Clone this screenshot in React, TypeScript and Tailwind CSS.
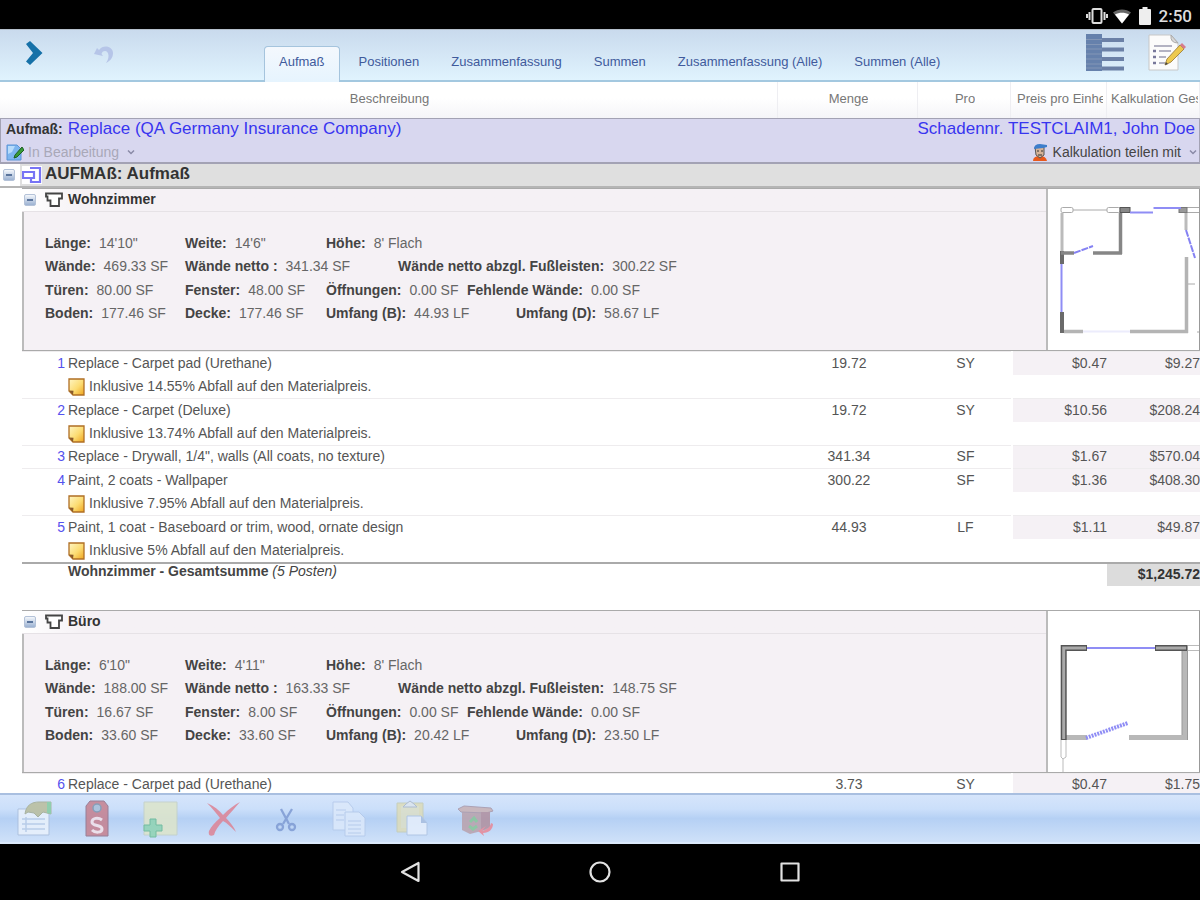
import React from "react";

const tabs = ["Aufmaß", "Positionen", "Zusammenfassung", "Summen", "Zusammenfassung (Alle)", "Summen (Alle)"];

type Stat = { label: string; value: string; at: string };
type Item = { n: number; text: string; qty: string; unit: string; price: string; total: string; note?: string };

const AT = ["col-start-1", "col-start-2", "col-start-3", "col-start-4", "col-start-5", "col-start-6"];

function stats(v: string[]): Stat[][] {
  return [
    [
      { label: "Länge:", value: v[0], at: AT[0] },
      { label: "Weite:", value: v[1], at: AT[1] },
      { label: "Höhe:", value: "8' Flach", at: AT[2] },
    ],
    [
      { label: "Wände:", value: v[2], at: AT[0] },
      { label: "Wände netto :", value: v[3], at: AT[1] },
      { label: "Wände netto abzgl. Fußleisten:", value: v[4], at: AT[3] },
    ],
    [
      { label: "Türen:", value: v[5], at: AT[0] },
      { label: "Fenster:", value: v[6], at: AT[1] },
      { label: "Öffnungen:", value: "0.00 SF", at: AT[2] },
      { label: "Fehlende Wände:", value: "0.00 SF", at: AT[4] },
    ],
    [
      { label: "Boden:", value: v[7], at: AT[0] },
      { label: "Decke:", value: v[7], at: AT[1] },
      { label: "Umfang (B):", value: v[8], at: AT[2] },
      { label: "Umfang (D):", value: v[9], at: AT[5] },
    ],
  ];
}

const living = stats(["14'10\"", "14'6\"", "469.33 SF", "341.34 SF", "300.22 SF", "80.00 SF", "48.00 SF", "177.46 SF", "44.93 LF", "58.67 LF"]);
const office = stats(["6'10\"", "4'11\"", "188.00 SF", "163.33 SF", "148.75 SF", "16.67 SF", "8.00 SF", "33.60 SF", "20.42 LF", "23.50 LF"]);

const livingItems: Item[] = [
  { n: 1, text: "Replace - Carpet pad (Urethane)", qty: "19.72", unit: "SY", price: "$0.47", total: "$9.27", note: "Inklusive 14.55% Abfall auf den Materialpreis." },
  { n: 2, text: "Replace - Carpet (Deluxe)", qty: "19.72", unit: "SY", price: "$10.56", total: "$208.24", note: "Inklusive 13.74% Abfall auf den Materialpreis." },
  { n: 3, text: "Replace - Drywall, 1/4\", walls (All coats, no texture)", qty: "341.34", unit: "SF", price: "$1.67", total: "$570.04" },
  { n: 4, text: "Paint, 2 coats - Wallpaper", qty: "300.22", unit: "SF", price: "$1.36", total: "$408.30", note: "Inklusive 7.95% Abfall auf den Materialpreis." },
  { n: 5, text: "Paint, 1 coat - Baseboard or trim, wood, ornate design", qty: "44.93", unit: "LF", price: "$1.11", total: "$49.87", note: "Inklusive 5% Abfall auf den Materialpreis." },
];

const officeItems: Item[] = [
  { n: 6, text: "Replace - Carpet pad (Urethane)", qty: "3.73", unit: "SY", price: "$0.47", total: "$1.75" },
];

function Collapse() {
  return (
    <button aria-label="Einklappen" className="flex size-3 shrink-0 items-center justify-center rounded-xs border border-[#b4c2d8] bg-linear-to-b from-[#f4f7fb] to-[#9cb2d2]">
      <span className="h-[2px] w-[6px] bg-[#5a749c]" />
    </button>
  );
}

function RoomGlyph() {
  return (
    <svg viewBox="0 0 18 16" className="h-4 w-[18px] shrink-0" fill="#fff" stroke="#444" strokeWidth="1.8">
      <path d="M1 1.5H17V6.5H14V14H5.5V8.5H2.5V4.5H1Z" />
    </svg>
  );
}

function NoteGlyph() {
  return (
    <svg viewBox="0 0 17 18" className="h-[18px] w-[17px] shrink-0">
      <defs>
        <linearGradient id="note" x1="0" y1="0" x2="1" y2="1">
          <stop offset="0" stopColor="#fff6c4" />
          <stop offset=".55" stopColor="#fcdc72" />
          <stop offset="1" stopColor="#eea41e" />
        </linearGradient>
      </defs>
      <path d="M1 1H16V17H5L1 13Z" fill="url(#note)" stroke="#b06f25" strokeWidth="1.3" />
      <path d="M1 12.5L5.5 12.8 5 17Z" fill="#8a5a2a" />
    </svg>
  );
}

function Caret() {
  return (
    <svg viewBox="0 0 8 6" className="h-[6px] w-2" fill="none" stroke="#8a8aa6" strokeWidth="1.5">
      <path d="M1 1.5L4 4.5 7 1.5" />
    </svg>
  );
}

function LivingPlan() {
  return (
    <svg viewBox="0 0 152 161" className="h-[161px] w-[152px]" fill="none">
      <g stroke="#aaa">
        <rect x="13" y="18.5" width="12" height="5" rx="1.5" />
        <path d="M25 21H59" />
        <rect x="59" y="18.5" width="13" height="5" rx="1.5" />
        <path d="M139 18.5H152M139 23.5H152" />
        <path d="M140 95H147M149 143H152" />
      </g>
      <rect x="72" y="18.5" width="10" height="5" fill="#888" stroke="#555" />
      <rect x="131" y="18.5" width="8" height="5" fill="#999" stroke="#777" />
      <path d="M14 24V63M138 24V41" stroke="#bbb" strokeWidth="3" />
      <path d="M138.5 68V144M16 142.5H35M82 142.5H140" stroke="#b4b4b4" strokeWidth="3.5" />
      <path d="M14 62V75M14 123V144" stroke="#6a6a6a" strokeWidth="4" />
      <path d="M13 64H26M45 64H74M72.500 24V65" stroke="#868686" strokeWidth="3.5" />
      <path d="M82 23.500H105M105.500 19H133M13.500 75V123" stroke="#8f8df5" strokeWidth="2" />
      <path d="M35 142.500H82" stroke="#ececfc" strokeWidth="2" />
      <path d="M26 64L45 57M138 41L147 69" stroke="#8582f3" strokeWidth="2" strokeDasharray="7 1" />
      <path d="M151.500 0V161" stroke="#999" />
    </svg>
  );
}

function OfficePlan() {
  return (
    <svg viewBox="0 0 152 161" className="h-[161px] w-[152px]" fill="none">
      <path d="M139 34.500H152M139 39.500H152M13 129V146L15 148L18 146V129M15 148V161" stroke="#bbb" />
      <path d="M136.500 40V129M18 126.500H39M81 126.500H140" stroke="#b8b8b8" strokeWidth="5" />
      <path d="M134 40V124M139.500 34V129" stroke="#999" />
      <path d="M15.700 129V37H39M107 37H139" stroke="#555" strokeWidth="6" />
      <path d="M15.700 128V37H38M108 37H138" stroke="#aaa" strokeWidth="3" />
      <path d="M39 37H107" stroke="#8f8df5" strokeWidth="2" />
      <path d="M38 127L80 112" stroke="#8f8df5" strokeWidth="4" strokeDasharray="2 1" />
      <path d="M151.500 0V161" stroke="#999" />
    </svg>
  );
}

function Room({ name, rows, plan }: { name: string; rows: Stat[][]; plan: React.ReactNode }) {
  return (
    <tr>
      <td colSpan={5} className="p-0 pl-[22px]">
        <div className="flex border-y border-[#aaa]">
          <div className="min-w-0 flex-1 bg-[#f5f1f5]">
            <div className="flex h-[23px] items-center border-b border-[#e6e2e6] bg-linear-to-r from-white from-0% to-[#f5f1f5] to-6% pl-[2px]">
              <Collapse />
              <span className="ml-[9px] flex items-center gap-[5px]">
                <RoomGlyph />
                <h2 className="pb-[3px] leading-5 font-bold text-[#333]">{name}</h2>
              </span>
            </div>
            <dl className="h-[138px] border-l-2 border-[#bbb] pt-[18px] pl-[21px] text-[#666]">
              {rows.map((row, i) => (
                <div key={i} className="-mb-px grid h-6 grid-cols-[140px_141px_72px_69px_49px_1fr] items-center last:mb-0 odd:h-[25px]">
                  {row.map((s) => (
                    <div key={s.label} className={s.at + " row-start-1 flex gap-2 whitespace-nowrap"}>
                      <dt className="font-bold text-[#444]">{s.label}</dt>
                      <dd>{s.value}</dd>
                    </div>
                  ))}
                </div>
              ))}
            </dl>
          </div>
          <div className="shrink-0 border-l-2 border-[#bbb] bg-white">{plan}</div>
        </div>
      </td>
    </tr>
  );
}

function Items({ items }: { items: Item[] }) {
  return (
    <>
      {items.map((it) => {
        const cell = "flex items-center border-t border-[#eeecee] pb-[2px] " + (it.note ? "h-6" : "h-[23px]");
        return (
          <React.Fragment key={it.n}>
            <tr className="text-[#555]">
              <td className="p-0 pl-[22px]">
                <div className={cell}>
                  <span className="w-[43px] text-right text-[#5552ee]">{it.n}</span>
                  <span className="ml-[3px] whitespace-nowrap">{it.text}</span>
                </div>
              </td>
              <td className="p-0"><div className={cell + " justify-center pl-[2px]"}>{it.qty}</div></td>
              <td className="p-0"><div className={cell + " justify-center pl-[2px]"}>{it.unit}</div></td>
              <td className="p-0 pl-[2px]"><div className={cell + " justify-end bg-[#f5f1f5]"}>{it.price}</div></td>
              <td className="p-0"><div className={cell + " justify-end bg-[#f5f1f5]"}>{it.total}</div></td>
            </tr>
            {it.note && (
              <tr className="text-[#555]">
                <td colSpan={5} className="p-0 pl-[68px]">
                  <div className="flex h-[23px] items-center gap-1">
                    <NoteGlyph />
                    <span className="pb-[2px]">{it.note}</span>
                  </div>
                </td>
              </tr>
            )}
          </React.Fragment>
        );
      })}
    </>
  );
}

const tools: { label: string; art: React.ReactNode }[] = [
  {
    label: "Eigenschaften",
    art: (
      <>
        <path d="M2 9H33V35H2Z" fill="#eaf2fc" stroke="#a9bddb" />
        <path d="M6 19H29M6 24H29M6 29H29M10 17V32" stroke="#b8cbe6" strokeWidth="1.5" />
        <path d="M9 14C10 5 16 2 23 2H35V14L27 12L22 17L18 13L12 12Z" fill="#b9bd9c" stroke="#a3ac93" />
        <path d="M31 2H35V14L31 13Z" fill="#86cba0" />
      </>
    ),
  },
  {
    label: "Preis",
    art: (
      <>
        <path d="M11 1H25L29 6V36H7V6Z" fill="#c5808f" stroke="#8f7088" />
        <circle cx="18" cy="8" r="4" fill="#a6bfd9" stroke="#7c93ad" strokeWidth="1.5" />
        <path d="M23 20C19 17 13 18 13 22C13 27 23 24 23 29C23 33 16 33 13 30" fill="none" stroke="#f3e2ea" strokeWidth="3" />
      </>
    ),
  },
  {
    label: "Notiz hinzufügen",
    art: (
      <>
        <path d="M2 2H35V35H2Z" fill="#dde5ca" stroke="#c3d0c5" />
        <path d="M8 19H14V25H20V31H14V37H8V31H2V25H8Z" fill="#8fd3b2" stroke="#66b893" />
      </>
    ),
  },
  {
    label: "Löschen",
    art: <path d="M2 3C9 6 14 10 18 15C24 9 29 5 35 2C30 8 25 13 21 18C25 22 29 27 31 32C26 27 22 23 18 21C13 26 10 31 9 35C5 37 3 35 4 31C6 27 10 22 15 18C11 13 7 8 2 3Z" fill="#dd8395" />,
  },
  {
    label: "Ausschneiden",
    art: (
      <g fill="none" stroke="#7f9bd3" strokeWidth="2.3">
        <path d="M13 9L21 24M24 9L15 24" />
        <circle cx="12" cy="27" r="3" />
        <circle cx="24" cy="27" r="3" />
      </g>
    ),
  },
  {
    label: "Kopieren",
    art: (
      <g fill="#dce9fb" stroke="#b4c9ea">
        <path d="M2 2H17L22 8V30H2Z" />
        <path d="M14 12H28L34 18V36H14Z" />
        <path d="M5 10H15M5 15H13M5 20H13M17 21H30M17 25H30M17 29H30M17 33H30" />
      </g>
    ),
  },
  {
    label: "Einfügen",
    art: (
      <>
        <path d="M3 3H29V32H3Z" fill="#dddcb9" stroke="#c5ccb4" />
        <path d="M7 6H25V28H7Z" fill="#dcdfc8" />
        <path d="M9 7L12 4L16 1L20 4L23 7Z" fill="#dce5ee" stroke="#a8b6ca" />
        <path d="M13 16H27L33 23V35H13Z" fill="#e6effc" stroke="#aec3e2" />
        <path d="M27 16V23H33Z" fill="#a9bfdf" />
      </>
    ),
  },
  {
    label: "Wiederherstellen",
    art: (
      <>
        <path d="M5 10H32V29L13 34L5 30Z" fill="#b9a1ac" />
        <path d="M1 9L7 6L34 8L36 11L29 13L4 12Z" fill="#c8b1b4" stroke="#a797a9" />
        <path d="M24 12L33 12V27L24 31Z" fill="#b08f9e" />
        <path d="M13 22L17 18L20 22M12 26L16 29L20 26" stroke="#86c498" strokeWidth="3" fill="none" />
        <path d="M34 23C33 28 29 30 25 31L29 26L21 31L27 36L26 33C32 33 36 29 36 24Z" fill="#e88897" />
      </>
    ),
  },
];

export default function App() {
  return (
    <div className="flex h-screen flex-col overflow-hidden bg-white font-['Liberation_Sans',Arial,sans-serif] text-[14px] leading-5">
      <div className="flex h-[29px] shrink-0 items-center justify-end gap-2 bg-black pt-[2px] pr-2 text-white">
        <svg viewBox="0 0 24 18" className="mr-[-4px] h-[18px] w-6" fill="none" stroke="#ddd" strokeWidth="2">
          <rect x="7.500" y="2" width="9" height="14" rx="1" />
          <path d="M4.500 5V13M19.500 5V13M2 7V11M22 7V11" />
        </svg>
        <svg viewBox="0 0 18 16" className="h-4 w-[18px]">
          <path d="M0 4.500C5 .5 13 .5 18 4.500L9 15.500Z" fill="#666" />
          <path d="M2 6.500C6 4 12 4 16 6.500L9 15.500Z" fill="#fff" />
        </svg>
        <svg viewBox="0 0 12 18" className="h-[18px] w-3 fill-[#eee]">
          <path d="M3.500 0H8.500V2H11Q12 2 12 3V17Q12 18 11 18H1Q0 18 0 17V3Q0 2 1 2H3.500Z" />
        </svg>
        <span className="font-[Roboto,sans-serif] text-[17px] font-medium text-[#ddd]">2:50</span>
      </div>

      <header className="flex h-[53px] shrink-0 justify-between border-t border-b-2 border-t-[#b5c0cc] border-b-[#a3c8e0] bg-linear-to-b from-[#c9daed] to-[#e0f3fe]">
        <div className="flex min-w-0">
          <div className="flex w-[264px] shrink-0 items-start gap-[47px] pt-[10px] pl-[24px]">
            <button aria-label="Weiter">
              <svg viewBox="0 0 22 26" className="h-[26px] w-[22px]">
                <path d="M2 4L6 1L18.500 13L6 25L2 21.500L9 13Z" fill="#1671a8" />
              </svg>
            </button>
            <button aria-label="Rückgängig">
              <svg viewBox="0 0 22 22" className="mt-[3px] h-[22px] w-[22px]">
                <path d="M1 11L4 5L6 7C10 1 20 3 20 10C20 15 17 18 13 20C17 15 16 8 12 8C10 8 9 9 8.500 11L10 13Z" fill="#b6c5e8" />
              </svg>
            </button>
          </div>
          <nav className="flex items-end text-[13px] whitespace-nowrap text-[#405a9c]" role="tablist">
            {tabs.map((t, i) => (
              <button
                key={t}
                role="tab"
                aria-selected={i === 0}
                className={
                  i === 0
                    ? "mr-[3px] -mb-[2px] flex h-9 items-center rounded-t-sm border border-b-0 border-[#a5c4dd] bg-linear-to-b from-[#f4f8fd] to-[#e6f4fe] px-[14px] pb-[5px]"
                    : "flex h-[34px] items-center px-4 pb-[2px]"
                }
              >
                {t}
              </button>
            ))}
          </nav>
        </div>
        <div className="flex items-start gap-6 pt-[3px] pr-[14px]">
          <button aria-label="Liste">
            <svg viewBox="0 0 38 38" className="h-[38px] w-[38px]">
              <path d="M0 1H16V38H0Z" fill="#6681ac" />
              <path d="M16 5H38V9H16ZM16 14.500H38V18.500H16ZM16 24H38V28H16ZM16 33.500H38V37.500H16Z" fill="#6b80a6" />
              <path d="M0 6.500H16M0 11.500H16M0 16H16M0 21H16M0 26H16M0 31H16M0 35H16" stroke="#8396b6" />
            </svg>
          </button>
          <button aria-label="Notizen bearbeiten">
            <svg viewBox="0 0 38 38" className="h-[38px] w-[38px]">
              <path d="M1 2H23L30 10V37H1Z" fill="#fbfbfb" stroke="#c7c7c7" />
              <path d="M23 2Q22 10 30 10Z" fill="#d8d8d8" stroke="#aaa" />
              <path d="M6 13H24M11 18H23M11 24H18M11 30H17" stroke="#9a9ab0" strokeWidth="1.500" />
              <path d="M5 18H8M5 24H8M5 30H8" stroke="#77779a" strokeWidth="2.500" />
              <path d="M17 32L19 26L32 12L36 16L23 29Z" fill="#edc94e" stroke="#a88a45" />
              <path d="M32 12L34 10L38 14L36 16Z" fill="#d77c8c" />
              <path d="M17 32L18 29L20 31Z" fill="#444" />
            </svg>
          </button>
        </div>
      </header>

      <main className="min-h-0 flex-1 overflow-hidden">
        <table className="w-full table-fixed">
          <colgroup>
            <col />
            <col className="w-[140px]" />
            <col className="w-[93px]" />
            <col className="w-[96px]" />
            <col className="w-[93px]" />
          </colgroup>
          <thead className="text-[13px] text-[#777]">
            <tr>
              {["Beschreibung", "Menge", "Pro", "Preis pro Einheit", "Kalkulation Gesamt"].map((h, i) => (
                <th key={h} className="p-0 font-normal">
                  <div
                    className={
                      "flex h-9 items-center overflow-hidden border-r border-[#eeeef2] bg-linear-to-b from-white from-45% to-[#f5f5f8] whitespace-nowrap " +
                      (i < 3 ? "justify-center pl-[2px]" : i === 3 ? "pr-[3px] pl-[6px]" : "pr-px pl-1")
                    }
                  >
                    <span className="overflow-hidden pb-[2px]">{h}</span>
                  </div>
                </th>
              ))}
            </tr>
          </thead>
          <tbody>
            <tr>
              <td colSpan={5} className="p-0">
                <div className="flex h-[46px] flex-col border border-b-2 border-[#a3a2b4] bg-[#d8d7ef]">
                  <div className="flex h-[19px] items-center justify-between pr-1 pl-[5px] text-[17px] text-[#3835f0]">
                    <h1 className="flex items-center gap-[5px]">
                      <span className="text-[14px] font-bold text-[#333]">Aufmaß:</span>
                      <a href="#anspruch">Replace (QA Germany Insurance Company)</a>
                    </h1>
                    <a href="#schaden">Schadennr. TESTCLAIM1, John Doe</a>
                  </div>
                  <div className="flex h-6 items-center justify-between pt-[3px] pr-[2px] pl-[5px]">
                    <button className="flex items-center gap-1 text-[#a9a8b8]">
                      <svg viewBox="0 0 18 18" className="h-[18px] w-[18px]">
                        <path d="M1 2H11L15 6V17H1Z" fill="#7db5ef" stroke="#5b94d6" />
                        <path d="M2 3H9L6 9L2 11Z" fill="#b8dcfb" />
                        <path d="M16 4L18 7L11 14L8 15L9 12Z" fill="#379b35" stroke="#1e5e22" />
                      </svg>
                      In Bearbeitung
                      <span className="ml-1"><Caret /></span>
                    </button>
                    <button className="flex items-center gap-1 text-[#444]">
                      <svg viewBox="0 0 18 18" className="h-[18px] w-[18px]">
                        <path d="M2 18Q2 13 9 13Q15 13 16 18Z" fill="#e8591c" />
                        <path d="M4 4H13V12L9 15L5 12Z" fill="#d6b398" stroke="#555" />
                        <path d="M3 6Q3 1 9 1L16 2V4L12 5Z" fill="#3d7ecb" />
                        <path d="M6 8H8M10 8H12M7 12H11" stroke="#333" />
                      </svg>
                      Kalkulation teilen mit
                      <span className="ml-1"><Caret /></span>
                    </button>
                  </div>
                </div>
              </td>
            </tr>
            <tr>
              <td colSpan={5} className="p-0">
                <div className="flex h-6 items-center border-b-2 border-[#b5b5b5] bg-[#dfdfdf]">
                  <span className="flex h-full w-5 items-center bg-white pl-[3px]"><Collapse /></span>
                  <svg viewBox="0 0 20 18" className="ml-[2px] h-[18px] w-5 bg-white" fill="none" stroke="#7774f5" strokeWidth="2.200">
                    <path d="M8 2H18V16H9V12H1V6H12M12 5V12H9" />
                  </svg>
                  <h2 className="ml-[3px] pb-[2px] text-[17px] font-bold text-[#333]">AUFMAß: Aufmaß</h2>
                </div>
              </td>
            </tr>
            <Room name="Wohnzimmer" rows={living} plan={<LivingPlan />} />
            <Items items={livingItems} />
            <tr>
              <td colSpan={5} className="p-0 pl-[22px]">
                <div className="flex h-12 items-start justify-between border-t-2 border-[#aaa]">
                  <span className="pl-[46px] leading-[15px] font-bold text-[#444]">
                    Wohnzimmer - Gesamtsumme <i className="font-normal">(5 Posten)</i>
                  </span>
                  <span className="w-[93px] bg-[#dcdcdc] pb-[2px] text-right font-bold text-[#333]">$1,245.72</span>
                </div>
              </td>
            </tr>
            <Room name="Büro" rows={office} plan={<OfficePlan />} />
            <Items items={officeItems} />
          </tbody>
        </table>
      </main>

      <div className="flex h-[51px] shrink-0 items-center border-t-2 border-b-2 border-t-[#a9bfe0] border-b-[#dceafc] bg-[linear-gradient(to_bottom,#d6e5fb_0%,#cbdffa_30%,#b5d0f4_50%,#cfe1f9_100%)] pl-[3px]" role="toolbar">
        {tools.map((t) => (
          <button key={t.label} aria-label={t.label} className="flex w-[63px] justify-center">
            <svg viewBox="0 0 37 38" className="h-[38px] w-[37px] opacity-85">{t.art}</svg>
          </button>
        ))}
      </div>

      <nav className="flex h-14 shrink-0 items-center justify-center bg-black">
        {[
          ["Zurück", "M20.500 3V21L4 12Z"],
          ["Start", "M12 2.500A9.500 9.500 0 1 0 12 21.500A9.500 9.500 0 1 0 12 2.500Z"],
          ["Übersicht", "M3.500 3.500H20.500V20.500H3.500Z"],
        ].map(([label, d]) => (
          <button key={label} aria-label={label} className="flex w-[190px] justify-center">
            <svg viewBox="0 0 24 24" className="size-6" fill="none" stroke="#e2e2e2" strokeWidth="2.200" strokeLinejoin="round">
              <path d={d} />
            </svg>
          </button>
        ))}
      </nav>
    </div>
  );
}
